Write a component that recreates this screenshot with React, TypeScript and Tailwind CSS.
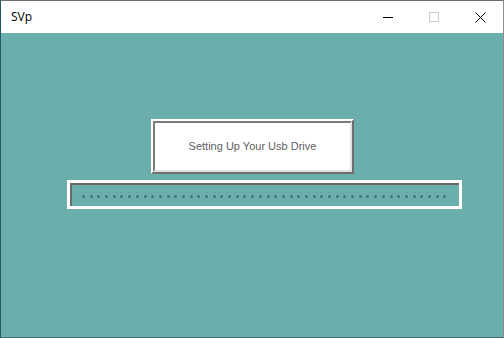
import React from "react";

export default function App() {
  const dots = Array.from({ length: 48 });
  return (
    <div className="w-[504px] h-[338px] flex flex-col border-t border-t-[#6e6e6e] border-l border-l-[#1f5b66] border-r border-r-[#8c8c8c] border-b border-b-[#3f6f73] bg-[#6baeab] overflow-hidden">
      <div className="h-[32px] bg-white flex items-center shrink-0">
        <span className="ml-[10px] text-[12px] text-black" style={{ fontFamily: '"Open Sans", "Noto Sans", sans-serif' }}>
          SVp
        </span>
        <div className="ml-auto flex h-full">
          <div className="w-[46px] h-full flex items-center justify-center">
            <div className="w-[10px] h-[1px] bg-black" />
          </div>
          <div className="w-[46px] h-full flex items-center justify-center">
            <div className="w-[10px] h-[10px] border border-[#cccccc]" />
          </div>
          <div className="w-[46px] h-full flex items-center justify-center">
            <svg width="11" height="11" viewBox="0 0 11 11">
              <path d="M0.5 0.5 L10.5 10.5 M10.5 0.5 L0.5 10.5" stroke="#000" strokeWidth="1" />
            </svg>
          </div>
        </div>
      </div>
      <div className="flex flex-col items-start pt-[86px]">
        <div className="ml-[150px] w-[203px] h-[55px] border-2 border-t-white border-l-white border-r-[#6f6f6f] border-b-[#6f6f6f]">
          <div className="w-full h-full border-2 border-t-[#7c7c7c] border-l-[#7c7c7c] border-r-[#e2e2e2] border-b-[#e2e2e2] bg-white flex items-center justify-center">
            <span className="text-[11px] text-[#5e5e5e]" style={{ fontFamily: '"Liberation Sans", Arial, sans-serif' }}>
              Setting Up Your Usb Drive
            </span>
          </div>
        </div>
        <div className="ml-[66px] mt-[6px] w-[395px] h-[29px] border-[3px] border-white">
          <div className="w-full h-full border-t-2 border-l-2 border-t-[#6a6a6a] border-l-[#6a6a6a] flex items-center pl-[10px] gap-[4.7px] pt-[1px]">
            {dots.map((_, i) => (
              <div key={i} className="w-[3px] h-[3px] rounded-full bg-[#3f7677] shrink-0" />
            ))}
          </div>
        </div>
      </div>
    </div>
  );
}
